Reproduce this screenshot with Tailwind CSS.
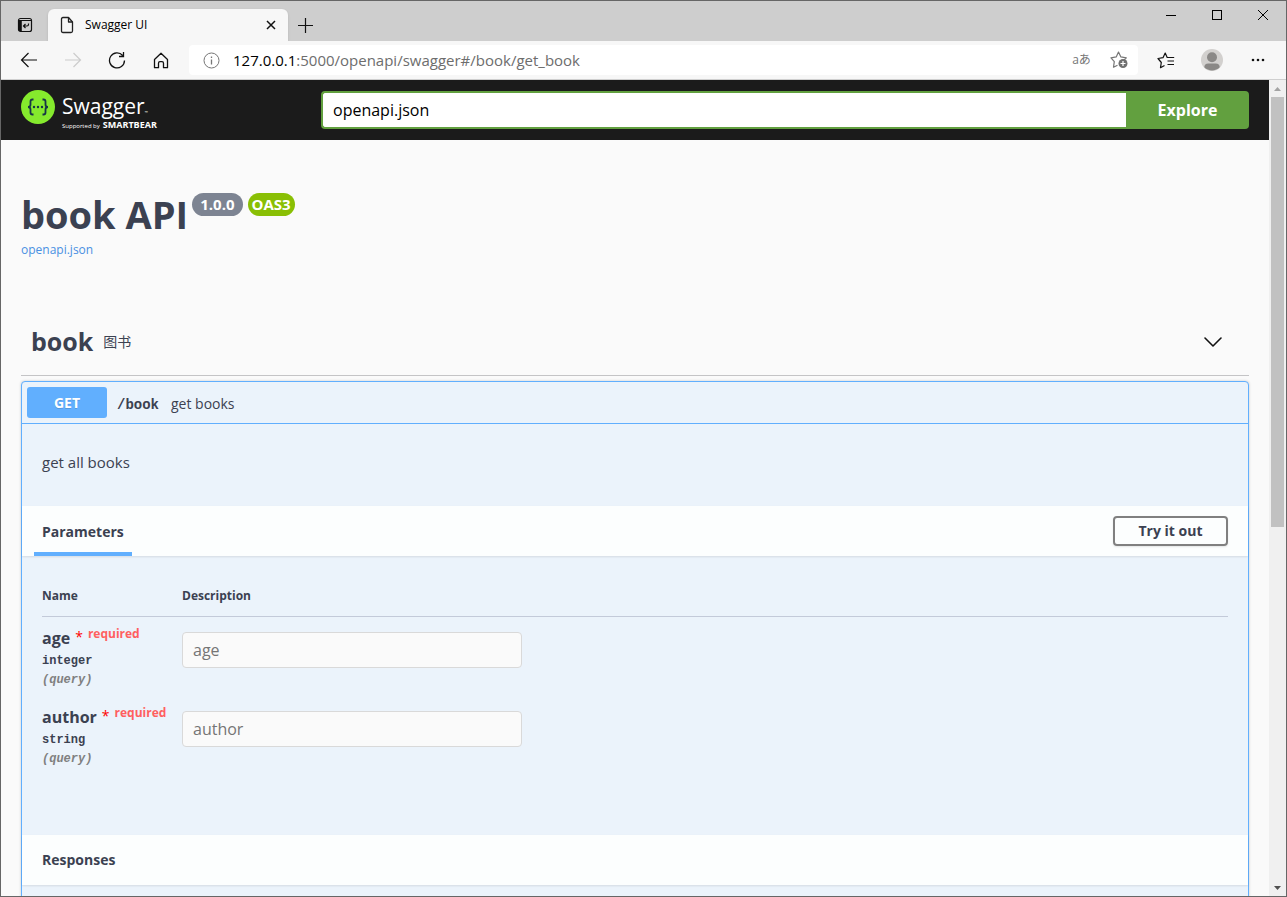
<!DOCTYPE html>
<html lang="en">
<head>
    <meta charset="UTF-8">
    <meta name="viewport" content="width=device-width, initial-scale=1.0">
    <title>Swagger UI</title>
    <script src="https://cdn.jsdelivr.net/npm/@tailwindcss/browser@4"></script>
</head>
<body class="h-screen overflow-hidden flex flex-col border border-[#666] bg-[#fafafa] font-['Open_Sans','Noto_Sans_CJK_SC',sans-serif] text-[#3b4151]">

    <!-- Tab strip -->
    <div class="flex shrink-0 h-10 bg-[#cecece]">
        <button type="button" aria-label="Tab actions" class="w-[47px] pt-2 flex items-center justify-center">
            <svg width="16" height="16" viewBox="0 0 16 16" fill="none" stroke="#111">
                <rect x="1.5" y="1.5" width="13" height="13" rx="2" stroke-width="1.2"/>
                <path d="M2 3.500h12" stroke-width="1"/>
                <path d="M3.300 4v10" stroke-width="3"/>
                <path d="M11.500 6.500v1q0 1.500-1.500 1.500H6.500M8.500 7L6.500 9l2 2" stroke-width="1.200"/>
            </svg>
        </button>
        <div class="flex items-center w-60 mt-2 rounded-t-md bg-[#f7f7f7] shadow-sm pl-3 pr-2">
            <svg width="14" height="18" viewBox="0 0 14 18" fill="none" stroke="#222" stroke-width="1.3" stroke-linejoin="round">
                <path d="M1.500 3q0-1.500 1.500-1.500h5.500L12.500 6v9q0 1.500-1.500 1.500H3q-1.500 0-1.500-1.500z"/>
                <path d="M8.500 1.500V6h4"/>
            </svg>
            <span class="ml-[11px] flex-1 text-xs text-black">Swagger UI</span>
            <button type="button" aria-label="Close tab" class="size-[18px] flex items-center justify-center">
                <svg width="10" height="10" viewBox="0 0 10 10" stroke="#111" stroke-width="1.5"><path d="M1 1l8 8M9 1L1 9"/></svg>
            </button>
        </div>
        <button type="button" aria-label="New tab" class="w-[34px] pt-2 flex items-center justify-center">
            <svg width="15" height="15" viewBox="0 0 15 15" stroke="#111" stroke-width="1.2"><path d="M7.500 0v15M0 7.500h15"/></svg>
        </button>
        <div class="ml-auto flex h-7">
            <button type="button" aria-label="Minimize" class="w-[46px] flex items-center justify-center">
                <svg width="10" height="10" viewBox="0 0 10 10" stroke="#000"><path d="M0 5.500h10"/></svg>
            </button>
            <button type="button" aria-label="Maximize" class="w-[46px] flex items-center justify-center">
                <svg width="10" height="10" viewBox="0 0 10 10" fill="none" stroke="#000"><rect x=".5" y=".5" width="9" height="9"/></svg>
            </button>
            <button type="button" aria-label="Close" class="w-[46px] flex items-center justify-center">
                <svg width="10" height="10" viewBox="0 0 10 10" stroke="#000"><path d="M0 0l10 10M10 0L0 10"/></svg>
            </button>
        </div>
    </div>

    <!-- Toolbar -->
    <div class="flex shrink-0 items-center h-[39px] pl-1.5 pr-[5px] bg-[#f7f7f7] border-b border-[#cfcfcf]">
        <button type="button" aria-label="Back" class="w-11 flex justify-center">
            <svg width="18" height="16" viewBox="0 0 18 16" fill="none" stroke="#111" stroke-width="1.200"><path d="M17 8H1.500M8.500 1L1.500 8l7 7"/></svg>
        </button>
        <button type="button" aria-label="Forward" class="w-11 flex justify-center">
            <svg width="18" height="16" viewBox="0 0 18 16" fill="none" stroke="#ccc" stroke-width="1.200"><path d="M1 8h15.500M9.500 1l7 7-7 7"/></svg>
        </button>
        <button type="button" aria-label="Reload" class="w-11 flex justify-center">
            <svg width="18" height="18" viewBox="0 0 18 18" fill="none" stroke="#111" stroke-width="1.300"><path d="M16.500 9.500A7.500 7.500 0 1 1 14.700 4.500M15.500 1v4.500H11"/></svg>
        </button>
        <button type="button" aria-label="Home" class="w-11 flex justify-center">
            <svg width="16" height="17" viewBox="0 0 16 17" fill="none" stroke="#111" stroke-width="1.300" stroke-linejoin="round"><path d="M1.500 7.500L8 1.300l6.500 6.200v8.200h-4v-4.500a1.500 1.500 0 0 0-1.500-1.500H7a1.500 1.500 0 0 0-1.500 1.500v4.500h-4z"/></svg>
        </button>
        <div class="ml-1.5 mr-[5px] flex flex-1 items-center h-[30px] rounded bg-white pl-3.5 pr-px">
            <svg width="17" height="17" viewBox="0 0 17 17" fill="none" stroke="#767676"><circle cx="8.500" cy="8.500" r="7.500"/><path d="M8.500 7.500v5M8.500 4.500V6" stroke-width="1.300"/></svg>
            <div class="ml-[13px] flex-1 text-[15px] text-[#6d6d6d]"><span class="text-black">127.0.0.1</span>:5000/openapi/swagger#/book/get_book</div>
            <button type="button" aria-label="Translate" class="w-[37px] text-xs text-[#767676]">aあ</button>
            <button type="button" aria-label="Add to favorites" class="w-[37px] flex justify-center">
                <svg width="18" height="18" viewBox="0 0 18 18" fill="none" stroke="#767676" stroke-width="1.200" stroke-linejoin="round">
                    <path d="M7.500 14.300L3.500 16.200l.8-5.500L1 6.800l5.200-.9L8.500 1l2.400 4.900 5.400.9-2 2"/>
                    <circle cx="13" cy="12.500" r="4.500" fill="#6f6f6f" stroke="none"/>
                    <path d="M13 10v5M10.500 12.500h5" stroke="#fff"/>
                </svg>
            </button>
        </div>
        <button type="button" aria-label="Favorites" class="w-[46px] flex justify-center">
            <svg width="18" height="17" viewBox="0 0 18 17" fill="none" stroke="#111" stroke-width="1.200" stroke-linejoin="round">
                <path d="M7.500 13.500L3.500 15.700l.8-5.200L1 6.500l5-.8L8.200 1l2 4.500h7M10.500 9h6.500M10.500 12.500h6.500"/>
            </svg>
        </button>
        <button type="button" aria-label="Profile" class="w-[46px] flex justify-center">
            <svg width="22" height="22" viewBox="0 0 22 22">
                <circle cx="11" cy="11" r="11" fill="#d2d0ce"/>
                <circle cx="11" cy="8.300" r="5" fill="#8a8886"/>
                <path d="M3.300 18.300q0-3.800 4-3.800h7.400q4 0 4 3.800A11 11 0 0 1 3.300 18.300z" fill="#8a8886"/>
            </svg>
        </button>
        <button type="button" aria-label="Settings and more" class="w-[46px] flex justify-center">
            <svg width="14" height="4" viewBox="0 0 14 4" fill="#111"><circle cx="2" cy="2" r="1.300"/><circle cx="7" cy="2" r="1.300"/><circle cx="12" cy="2" r="1.300"/></svg>
        </button>
    </div>

    <div class="flex flex-1 min-h-0">
        <div class="flex-1 min-w-0 overflow-hidden">

            <!-- Topbar -->
            <header class="flex items-center h-[60px] px-5 bg-[#1b1b1b]">
                <a href="#" class="self-stretch flex items-start w-[300px] pt-2.5 text-white">
                    <svg width="34" height="34" viewBox="0 0 34 34">
                        <circle cx="17" cy="17" r="17" fill="#85ea2d"/>
                        <g fill="none" stroke="#173647" stroke-width="1.800">
                            <path d="M12.500 9.500h-1q-2 0-2 2v3q0 2.500-2.500 2.500 2.500 0 2.500 2.500v3q0 2 2 2h1"/>
                            <path d="M21.500 9.500h1q2 0 2 2v3q0 2.500 2.500 2.500-2.500 0-2.500 2.500v3q0 2-2 2h-1"/>
                        </g>
                        <g fill="#173647"><circle cx="13" cy="17" r="1.200"/><circle cx="17" cy="17" r="1.200"/><circle cx="21" cy="17" r="1.200"/></g>
                    </svg>
                    <span class="ml-[7px] flex flex-col">
                        <span class="text-[21px] leading-8">Swagger<span class="text-[4px] leading-none">™</span></span>
                        <span class="flex items-baseline gap-[3px] text-[6px] leading-[6px]">Supported by <b class="text-[9px]">SMARTBEAR</b></span>
                    </span>
                </a>
                <form class="flex flex-1">
                    <input type="text" aria-label="Definition URL" value="openapi.json" class="flex-1 min-w-0 h-[38px] rounded-l border-2 border-r-0 border-[#62a03f] bg-white px-2.5 text-base text-black outline-none">
                    <button type="button" class="w-[123px] h-[38px] rounded-r bg-[#62a03f] text-base font-bold text-white">Explore</button>
                </form>
            </header>

            <main class="px-5">
                <section class="pt-[50px] pb-12">
                    <div class="flex items-start">
                        <h2 class="mb-0.5 text-[38px] leading-[48px] font-bold">book API</h2>
                        <span class="mt-[3px] ml-1 h-[23px] px-2 rounded-full bg-[#7d8492] text-[15px] leading-[23px] font-bold text-white">1.0.0</span>
                        <span class="mt-[3px] ml-[5px] h-[23px] px-1 rounded-full bg-[#89bf04] text-[15px] leading-[23px] font-bold text-white">OAS3</span>
                    </div>
                    <a href="#" class="block text-xs leading-5 text-[#4990e2]">openapi.json</a>
                </section>

                <h3 class="flex items-center h-[68px] pl-2.5 pr-[27px] border-b border-[#c4c4c6]">
                    <span class="text-[25px] font-bold">book</span>
                    <small class="ml-2.5 flex-1 text-sm">图书</small>
                    <button type="button" aria-label="Collapse operation">
                        <svg width="18" height="10" viewBox="0 0 18 10" fill="none" stroke="#111" stroke-width="1.600" stroke-linecap="round" stroke-linejoin="round"><path d="M1 1l8 8 8-8"/></svg>
                    </button>
                </h3>

                <section class="mt-[5px] rounded border border-[#61affe] bg-[#ebf3fb] shadow-[0_0_3px_rgba(0,0,0,0.19)]">
                    <div class="flex items-center h-[42px] px-[5px] border-b border-[#61affe]">
                        <button type="button" class="w-20 h-[31px] rounded-[3px] bg-[#61affe] text-sm font-bold text-white text-shadow-2xs">GET</button>
                        <span class="ml-2.5 pt-1 font-['Liberation_Mono',monospace] text-sm font-bold">/book</span>
                        <span class="ml-3 pt-0.5 text-sm">get books</span>
                    </div>
                    <p class="px-5 pt-[27px] pb-[33px] text-[15px] leading-[22px]">get all books</p>

                    <div class="flex items-center h-[50px] px-5 bg-[#fcfefe] shadow-[0_1px_2px_rgba(0,0,0,0.1)]">
                        <div class="flex-1 self-stretch flex">
                            <h4 class="-ml-2 px-2 border-b-4 border-[#61affe] text-sm leading-[52px] font-bold">Parameters</h4>
                        </div>
                        <button type="button" class="w-[115px] h-[30px] rounded border-2 border-[#808080] text-sm font-bold shadow-[0_1px_2px_rgba(0,0,0,0.1)]">Try it out</button>
                    </div>

                    <div class="px-5 pt-5 pb-[60px]">
                        <table class="w-full table-fixed border-collapse text-left">
                            <thead>
                                <tr class="h-10 border-b border-[#c3cad9] text-xs">
                                    <th class="w-[140px]">Name</th>
                                    <th>Description</th>
                                </tr>
                            </thead>
                            <tbody>
                                <tr class="align-top">
                                    <td class="pt-2.5 pb-1.5 whitespace-nowrap">
                                        <label for="age" class="flex mb-[3px] text-base leading-[22px] font-bold">age<span class="ml-[5px] text-sm font-normal text-[#f00]">*</span><span class="ml-[5px] text-xs leading-[14px] text-[#ff5f5f]">required</span></label>
                                        <div class="font-['Liberation_Mono',monospace] text-xs leading-[19px] font-bold">integer</div>
                                        <div class="font-['Liberation_Mono',monospace] text-xs leading-[19px] font-bold italic text-[#808080]">(query)</div>
                                    </td>
                                    <td class="pt-[15px]"><input id="age" type="text" placeholder="age" class="block w-[340px] h-9 px-2.5 rounded border border-[#d9d9d9] bg-[#fafafa] text-base placeholder:text-[#757575]"></td>
                                </tr>
                                <tr class="align-top">
                                    <td class="pt-2.5 pb-1.5 whitespace-nowrap">
                                        <label for="author" class="flex mb-[3px] text-base leading-[22px] font-bold">author<span class="ml-[5px] text-sm font-normal text-[#f00]">*</span><span class="ml-[5px] text-xs leading-[14px] text-[#ff5f5f]">required</span></label>
                                        <div class="font-['Liberation_Mono',monospace] text-xs leading-[19px] font-bold">string</div>
                                        <div class="font-['Liberation_Mono',monospace] text-xs leading-[19px] font-bold italic text-[#808080]">(query)</div>
                                    </td>
                                    <td class="pt-[15px]"><input id="author" type="text" placeholder="author" class="block w-[340px] h-9 px-2.5 rounded border border-[#d9d9d9] bg-[#fafafa] text-base placeholder:text-[#757575]"></td>
                                </tr>
                            </tbody>
                        </table>
                    </div>

                    <div class="flex items-center h-[50px] px-5 bg-[#fcfefe] shadow-[0_1px_2px_rgba(0,0,0,0.1)]">
                        <h4 class="text-sm leading-[52px] font-bold">Responses</h4>
                    </div>
                    <div class="h-40"></div>
                </section>
            </main>
        </div>

        <!-- Scrollbar -->
        <div class="flex flex-col w-[17px] bg-[#f0f0f0]">
            <div class="h-[17px] flex items-center justify-center"><svg width="7" height="4" viewBox="0 0 7 4" fill="#a3a3a3"><path d="M0 4L3.500 0 7 4z"/></svg></div>
            <div class="h-[430px] mx-0.5 bg-[#c1c1c1]"></div>
            <div class="mt-auto h-[17px] flex items-center justify-center"><svg width="7" height="4" viewBox="0 0 7 4" fill="#505050"><path d="M0 0l3.500 4L7 0z"/></svg></div>
        </div>
    </div>
</body>
</html>
